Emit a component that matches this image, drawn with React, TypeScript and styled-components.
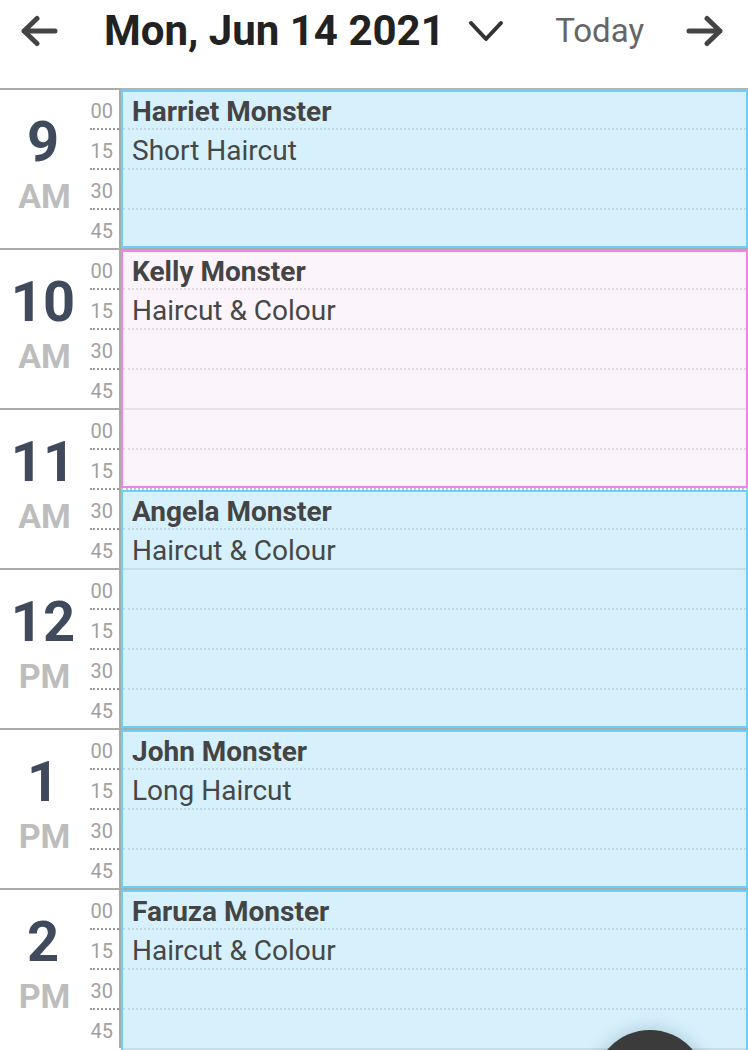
import React from "react";
import styled, { createGlobalStyle, css } from "styled-components";

const GlobalStyle = createGlobalStyle`
  html, body {
    margin: 0;
    padding: 0;
    background: #ffffff;
    overflow: hidden;
  }
  body {
    font-family: Roboto, "Noto Sans", "Liberation Sans", sans-serif;
    -webkit-font-smoothing: antialiased;
  }
  * {
    box-sizing: border-box;
  }
`;

type Tone = "blue" | "pink";

const ROW = 40;

const hours = [
  { hour: "9", period: "AM" },
  { hour: "10", period: "AM" },
  { hour: "11", period: "AM" },
  { hour: "12", period: "PM" },
  { hour: "1", period: "PM" },
  { hour: "2", period: "PM" },
];

const minutes = ["00", "15", "30", "45"];

// start / slots are in 15 minute steps from 9:00
const appointments: { name: string; service: string; start: number; slots: number; tone: Tone }[] = [
  { name: "Harriet Monster", service: "Short Haircut", start: 0, slots: 4, tone: "blue" },
  { name: "Kelly Monster", service: "Haircut & Colour", start: 4, slots: 6, tone: "pink" },
  { name: "Angela Monster", service: "Haircut & Colour", start: 10, slots: 6, tone: "blue" },
  { name: "John Monster", service: "Long Haircut", start: 16, slots: 4, tone: "blue" },
  { name: "Faruza Monster", service: "Haircut & Colour", start: 20, slots: 5, tone: "blue" },
];

const tones = {
  blue: { bg: "#d6f1fc", border: "#6dcff6" },
  pink: { bg: "#fbf4fb", border: "#ef86e7" },
};

function App() {
  const totalRows = hours.length * 4;

  return (
    <Page>
      <GlobalStyle />
      <Header>
        <IconButton aria-label="previous day">
          <svg width="38" height="32" viewBox="0 0 38 32">
            <path d="M35 16H4M17 3.5 4 16l13 12.5" fill="none" stroke="#444" strokeWidth="5" strokeLinecap="round" strokeLinejoin="round" />
          </svg>
        </IconButton>
        <DateTitle>Mon, Jun 14 2021</DateTitle>
        <Chevron aria-label="pick date">
          <svg width="36" height="24" viewBox="0 0 36 24">
            <path d="M3 4l15 16L33 4" fill="none" stroke="#333" strokeWidth="4" strokeLinecap="round" strokeLinejoin="round" />
          </svg>
        </Chevron>
        <Spacer />
        <TodayButton>Today</TodayButton>
        <IconButton aria-label="next day" $last>
          <svg width="38" height="32" viewBox="0 0 38 32">
            <path d="M3 16h31M21 3.5 34 16 21 28.5" fill="none" stroke="#444" strokeWidth="5" strokeLinecap="round" strokeLinejoin="round" />
          </svg>
        </IconButton>
      </Header>

      <Timeline $rows={totalRows}>
        {hours.map((h, hi) => (
          <React.Fragment key={h.hour + h.period}>
            <HourLabel style={{ gridRow: `${hi * 4 + 1} / span 4` }}>
              <HourNumber>{h.hour}</HourNumber>
              <Period>{h.period}</Period>
            </HourLabel>
            {minutes.map((m, mi) => (
              <MinuteCell key={m} $onHour={mi === 0} style={{ gridRow: hi * 4 + mi + 1 }}>
                {m}
              </MinuteCell>
            ))}
            {minutes.map((m, mi) => (
              <SlotCell key={"s" + m} $onHour={mi === 0} $first={hi === 0 && mi === 0} style={{ gridRow: hi * 4 + mi + 1 }} />
            ))}
          </React.Fragment>
        ))}

        {appointments.map((a) => (
          <Appointment key={a.name} $tone={a.tone} style={{ gridRow: `${a.start + 1} / span ${a.slots}` }}>
            {Array.from({ length: a.slots }).map((_, i) => (
              <InnerSlot
                key={i}
                $first={i === 0}
                $last={i === a.slots - 1}
                $onHour={(a.start + i) % 4 === 0}
              >
                {i === 0 && <ClientName>{a.name}</ClientName>}
                {i === 1 && <Service>{a.service}</Service>}
              </InnerSlot>
            ))}
          </Appointment>
        ))}
      </Timeline>

      <Fab aria-label="add" />
    </Page>
  );
}

const Page = styled.div`
  width: 748px;
  height: 1050px;
  overflow: hidden;
  position: relative;
  background: #fff;
`;

const Header = styled.header`
  height: 88px;
  display: flex;
  align-items: flex-start;
  padding: 15px 24px 0 20px;
`;

const IconButton = styled.button<{ $last?: boolean }>`
  border: none;
  background: none;
  padding: 0;
  height: 32px;
  display: flex;
  align-items: center;
  margin-left: ${(p) => (p.$last ? "42px" : "0")};
`;

const DateTitle = styled.h1`
  margin: 0 0 0 46px;
  font-size: 42px;
  font-weight: 700;
  color: #222;
  line-height: 32px;
  white-space: nowrap;
`;

const Chevron = styled.button`
  border: none;
  background: none;
  padding: 0;
  margin-left: 23px;
  height: 32px;
  display: flex;
  align-items: center;
`;

const Spacer = styled.div`
  flex: 1;
`;

const TodayButton = styled.button`
  border: none;
  background: none;
  padding: 0;
  font-family: inherit;
  font-size: 33px;
  color: #666;
  line-height: 32px;
  height: 32px;
`;

const Timeline = styled.section<{ $rows: number }>`
  display: grid;
  grid-template-columns: 86px 35px 1fr;
  grid-template-rows: repeat(${(p) => p.$rows}, ${ROW}px);
  grid-auto-rows: ${ROW}px;
`;

const HourLabel = styled.div`
  grid-column: 1;
  border-top: 2px solid #aaa;
  display: flex;
  flex-direction: column;
  align-items: center;
  justify-content: center;
  padding-bottom: 6px;
`;

const HourNumber = styled.span`
  font-size: 56px;
  font-weight: 700;
  line-height: 60px;
  color: #3f4a5c;
`;

const Period = styled.span`
  font-size: 34px;
  font-weight: 700;
  line-height: 48px;
  color: #bdbdbd;
  padding-left: 3px;
`;

const MinuteCell = styled.div<{ $onHour: boolean }>`
  grid-column: 2;
  position: relative;
  border-right: 2px solid #aaa;
  display: flex;
  align-items: center;
  justify-content: flex-end;
  padding: 5px 6px 0 0;
  font-size: 20px;
  color: #a0a0a0;

  &::before {
    content: "";
    position: absolute;
    top: 0;
    right: 0;
    left: ${(p) => (p.$onHour ? "0" : "4px")};
    border-top: 2px ${(p) => (p.$onHour ? "solid #aaa" : "dotted #9a9a9a")};
  }
`;

const SlotCell = styled.div<{ $onHour: boolean; $first: boolean }>`
  grid-column: 3;
  border-top: 2px ${(p) => (p.$onHour ? "solid #a9adb0" : "dotted #c4c4c4")};
  ${(p) =>
    p.$first &&
    css`
      border-top: 3px solid #b3b3b3;
    `}
`;

const Appointment = styled.article<{ $tone: Tone }>`
  grid-column: 3;
  margin-top: 2px;
  z-index: 1;
  display: flex;
  flex-direction: column;
  background: ${(p) => tones[p.$tone].bg};
  border: 2px solid ${(p) => tones[p.$tone].border};
  overflow: hidden;
`;

const InnerSlot = styled.div<{ $first: boolean; $last: boolean; $onHour: boolean }>`
  flex: none;
  height: ${(p) => (p.$first ? 36 : p.$last ? 38 : 40)}px;
  display: flex;
  align-items: center;
  padding: ${(p) => (p.$first ? "2px" : "2px")} 8px 0 9px;
  ${(p) =>
    !p.$first &&
    css`
      border-top: 2px ${p.$onHour ? "solid rgba(0, 0, 0, 0.08)" : "dotted rgba(0, 0, 0, 0.1)"};
    `}
`;

const ClientName = styled.span`
  font-size: 28px;
  font-weight: 700;
  color: #444;
  white-space: nowrap;
`;

const Service = styled.span`
  font-size: 28px;
  color: #474747;
  white-space: nowrap;
`;

const Fab = styled.button`
  position: absolute;
  left: 594px;
  top: 1030px;
  width: 112px;
  height: 112px;
  border-radius: 50%;
  border: none;
  background: #3b3b3b;
  box-shadow: 0 0 18px rgba(0, 40, 60, 0.22);
  z-index: 2;
`;

export default App;
